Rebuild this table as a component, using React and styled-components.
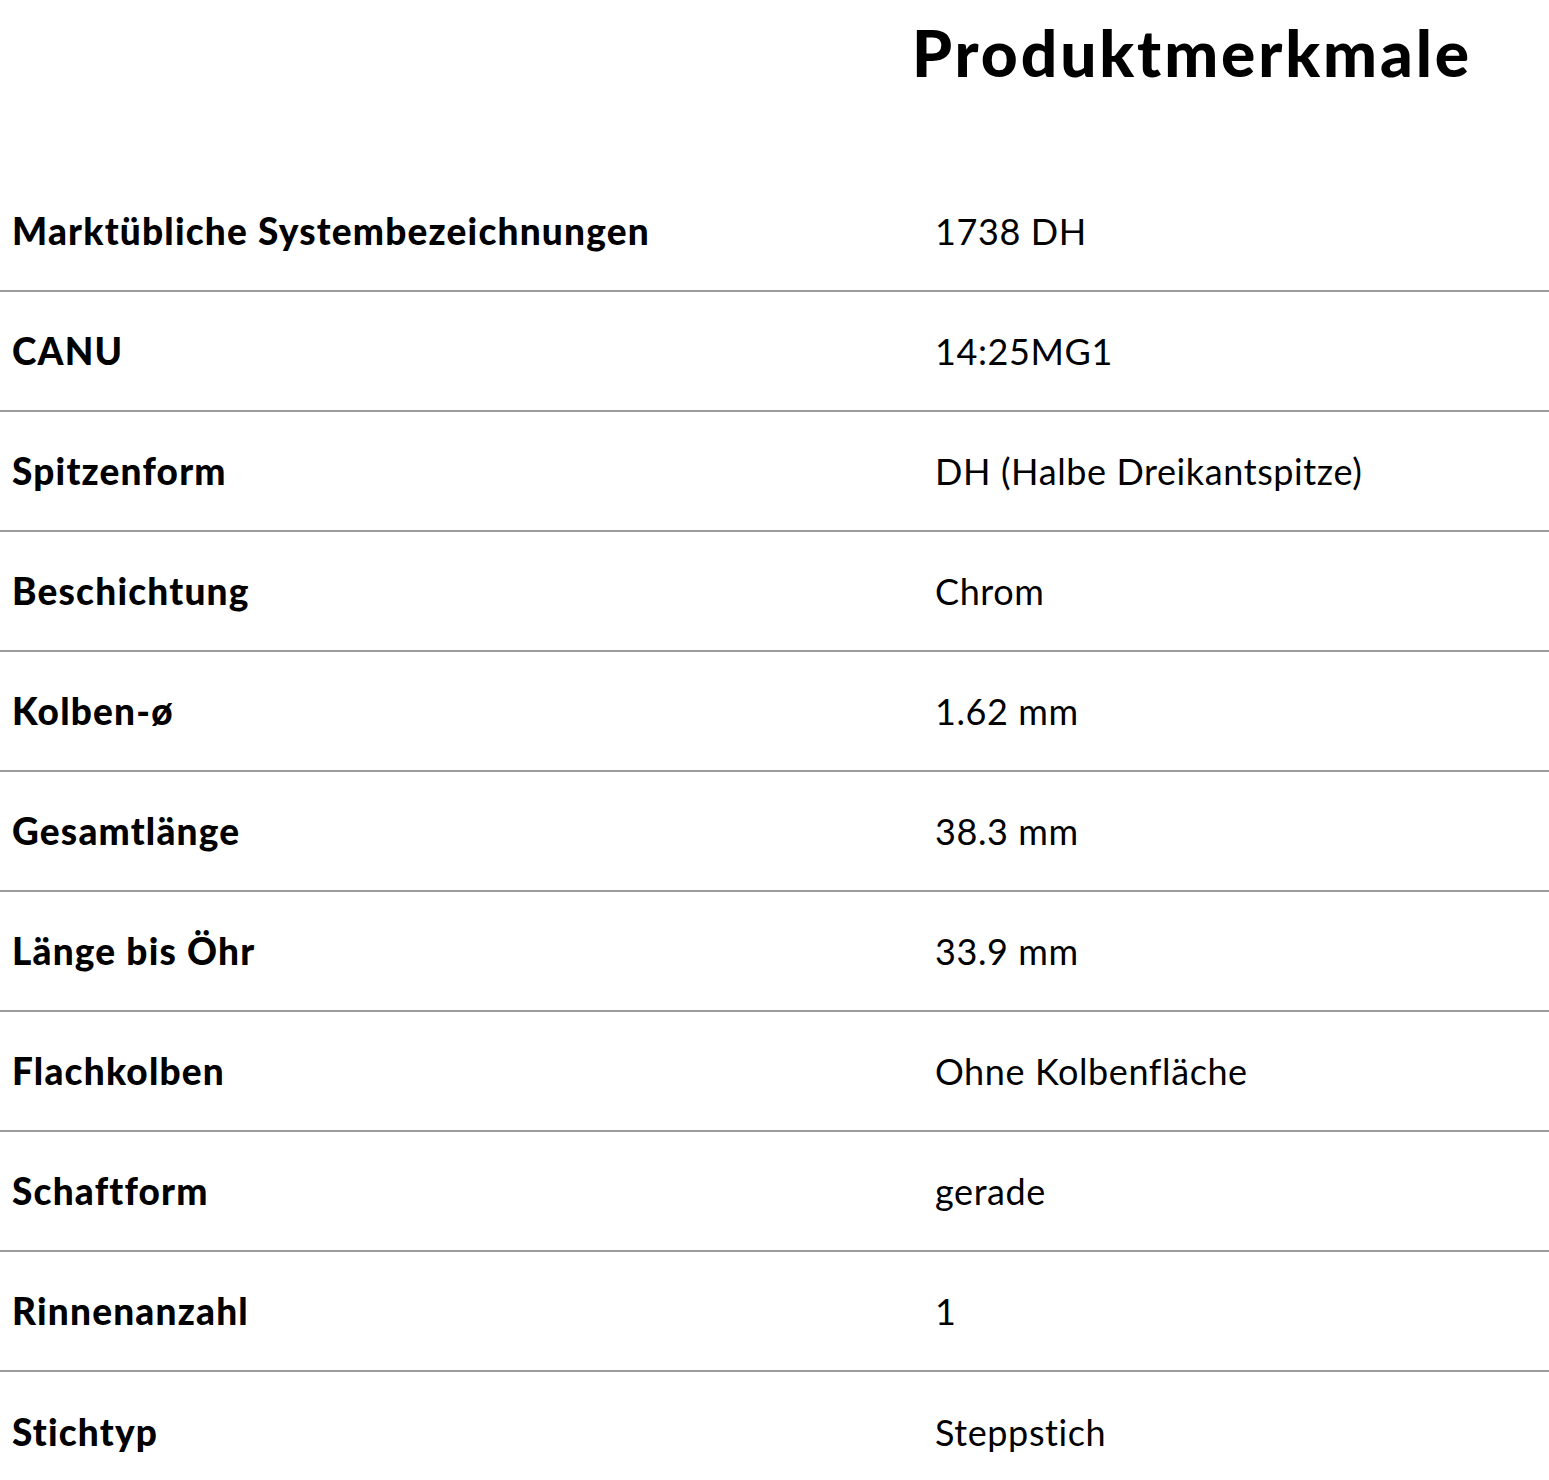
import React from 'react';
import styled, { createGlobalStyle } from 'styled-components';

const GlobalStyle = createGlobalStyle`
  body {
    margin: 0;
    background: #fff;
    font-family: Lato, "Open Sans", sans-serif;
    color: #000;
  }
`;

const rows = [
  ['Marktübliche Systembezeichnungen', '1738 DH'],
  ['CANU', '14:25MG1'],
  ['Spitzenform', 'DH (Halbe Dreikantspitze)'],
  ['Beschichtung', 'Chrom'],
  ['Kolben-ø', '1.62 mm'],
  ['Gesamtlänge', '38.3 mm'],
  ['Länge bis Öhr', '33.9 mm'],
  ['Flachkolben', 'Ohne Kolbenfläche'],
  ['Schaftform', 'gerade'],
  ['Rinnenanzahl', '1'],
  ['Stichtyp', 'Steppstich'],
];

function App() {
  return (
    <>
      <GlobalStyle />
      <Page>
        <Header>
          <span />
          <Title>Produktmerkmale</Title>
        </Header>
        <Table>
          {rows.map(([label, value]) => (
            <Row key={label}>
              <Label>{label}</Label>
              <Value>{value}</Value>
            </Row>
          ))}
        </Table>
      </Page>
    </>
  );
}

const Page = styled.div`
  width: 100%;
`;

const Header = styled.div`
  display: grid;
  grid-template-columns: 912px 1fr;
  height: 172px;
`;

const Title = styled.h1`
  margin: 0;
  padding-top: 14px;
  font-size: 64px;
  font-weight: 900;
  line-height: 78px;
  letter-spacing: 2.9px;
`;

const Table = styled.div`
  display: flex;
  flex-direction: column;
`;

const Row = styled.div`
  display: grid;
  grid-template-columns: 923px 1fr;
  align-items: center;
  height: 120px;
  box-sizing: border-box;
  border-bottom: 2px solid #9a9a9a;
  padding-left: 12px;
  &:last-child {
    border-bottom: none;
  }
`;

const Label = styled.div`
  font-size: 37px;
  font-weight: 900;
  line-height: 40px;
  letter-spacing: 1.2px;
`;

const Value = styled.div`
  font-size: 36px;
  font-weight: 400;
  line-height: 40px;
  letter-spacing: 0.6px;
`;

export default App;
